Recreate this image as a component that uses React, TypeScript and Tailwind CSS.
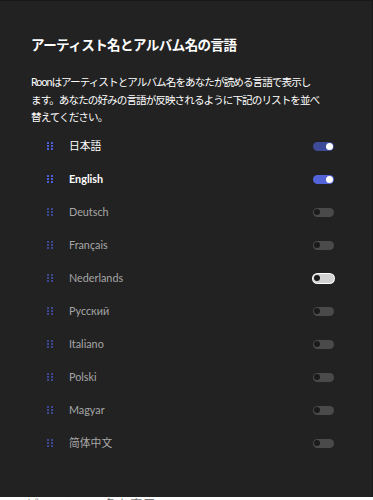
const languages = [
  { name: "日本語", on: true, bright: false, bold: false },
  { name: "English", on: true, bright: true, bold: true },
  { name: "Deutsch", on: false },
  { name: "Français", on: false },
  { name: "Nederlands", on: false, light: true },
  { name: "Русский", on: false },
  { name: "Italiano", on: false },
  { name: "Polski", on: false },
  { name: "Magyar", on: false },
  { name: "简体中文", on: false },
];

const font = {
  fontFamily: 'Lato, "Noto Sans CJK JP", sans-serif',
};

const Handle = ({ active }: { active: boolean }) => (
  <div className="grid grid-cols-2 gap-x-[2px] gap-y-[1px] w-[6px]">
    {[0, 1, 2, 3, 4, 5].map((i) => (
      <span
        key={i}
        className={
          "block w-[2px] h-[2px] " +
          (active ? "bg-[#4d5fd8]" : "bg-[#3c4894]")
        }
      />
    ))}
  </div>
);

const Toggle = ({
  on,
  bright,
  light,
}: {
  on: boolean;
  bright?: boolean;
  light?: boolean;
}) => {
  if (on) {
    return (
      <div
        className={
          "w-[21px] h-[9px] rounded-full flex items-center justify-end px-[1px] " +
          (bright ? "bg-[#5264d8]" : "bg-[#3e4b98]")
        }
      >
        <span className="block w-[7px] h-[7px] rounded-full bg-white" />
      </div>
    );
  }
  if (light) {
    return (
      <div className="w-[21px] h-[9px] rounded-full flex items-center px-[1px] bg-[#d2d2d2] ring-1 ring-white">
        <span className="block w-[6px] h-[6px] rounded-full bg-[#1a1a1a]" />
      </div>
    );
  }
  return (
    <div className="w-[21px] h-[9px] rounded-full flex items-center px-[1px] bg-[#4a4a4a]">
      <span className="block w-[6px] h-[6px] rounded-full bg-[#1b1b1b]" />
    </div>
  );
};

export default function App() {
  return (
    <div className="w-[373px] h-[500px] overflow-hidden bg-white" style={font}>
      <div className="h-[497px] bg-[#222222] border-t border-r border-[#181818] pl-[31px] pr-[30px] pt-[34px]">
        <h1 className="text-[13.5px] leading-[20px] font-bold text-white tracking-[-0.55px]">
          アーティスト名とアルバム名の言語
        </h1>
        <p className="mt-[19px] text-[10.6px] leading-[17.5px] text-white whitespace-nowrap tracking-[-0.95px]">
          Roonはアーティストとアルバム名をあなたが読める言語で表示し
          <br />
          ます。あなたの好みの言語が反映されるように下記のリストを並べ
          <br />
          替えてください。
        </p>
        <div className="mt-[3px] flex flex-col">
          {languages.map((l) => (
            <div key={l.name} className="h-[33px] flex items-center">
              <div className="w-[16px]" />
              <Handle active={l.on} />
              <span
                className={
                  "ml-[16px] text-[10.8px] flex-1 " +
                  (l.on ? "text-white " : "text-[#a6a6a6] ") +
                  (l.bold ? "font-bold" : "font-normal")
                }
              >
                {l.name}
              </span>
              <div className="mr-[8px]">
                <Toggle on={l.on} bright={l.bright} light={l.light} />
              </div>
            </div>
          ))}
        </div>
      </div>
      <div className="text-[13px] leading-[13px] text-[#777] whitespace-nowrap pt-[1px]">
        コンピレーション名を表示
      </div>
    </div>
  );
}
